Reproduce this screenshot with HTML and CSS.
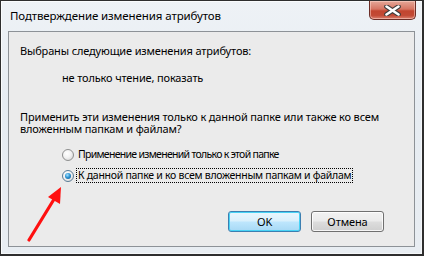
FILE: index.html
```html
<!DOCTYPE html>
<html lang="ru">
<head>
<meta charset="utf-8">
<title>Подтверждение изменения атрибутов</title>
<link rel="stylesheet" href="styles.css">
</head>
<body>
<div class="window">
  <div class="titlebar">
    <span class="title">Подтверждение изменения атрибутов</span>
    <div class="close">
      <svg width="19" height="11" viewBox="0 0 19 11">
        <path d="M3.5 1.5 L15.5 9.5 M15.5 1.5 L3.5 9.5" stroke="#3b3b3b" stroke-width="4.6" stroke-linecap="round"/>
        <path d="M3.5 1.5 L15.5 9.5 M15.5 1.5 L3.5 9.5" stroke="#ffffff" stroke-width="2.6" stroke-linecap="round"/>
      </svg>
    </div>
  </div>
  <div class="panel">
    <p class="line first">Выбраны следующие изменения атрибутов:</p>
    <p class="line attrs">не только чтение, показать</p>
    <div class="question">
      <p class="line">Применить эти изменения только к данной папке или также ко всем</p>
      <p class="line">вложенным папкам и файлам?</p>
    </div>
    <div class="options">
      <label class="option">
        <span class="radio"></span>
        <span class="label opt1">Применение изменений только к этой папке</span>
      </label>
      <label class="option">
        <span class="radio checked"><span class="dot"></span></span>
        <span class="label opt2 focus">К данной папке и ко всем вложенным папкам и файлам</span>
      </label>
    </div>
    <div class="buttons">
      <button class="btn default">OK</button>
      <button class="btn">Отмена</button>
    </div>
  </div>
  <svg class="arrow" width="60" height="70" viewBox="0 0 60 70">
    <path d="M2 56 L29 12" stroke="#ff1010" stroke-width="3.2" stroke-linecap="round"/>
    <path d="M34 3 L21 13 L33 20 Z" fill="#ff1010"/>
  </svg>
</div>
</body>
</html>
```
FILE: styles.css
```css
* { box-sizing: border-box; }
html, body { margin: 0; padding: 0; }
body {
  width: 424px;
  height: 256px;
  background: #ffffff;
  font-family: "Noto Sans", "Open Sans", sans-serif;
  font-size: 11px;
  letter-spacing: -0.15px;
  color: #000;
}
.window {
  position: relative;
  width: 424px;
  height: 256px;
  border: 1px solid #2e2e2e;
  border-right: 2px solid #2e2e2e;
  border-bottom: 2px solid #2e2e2e;
  background: linear-gradient(to bottom, #eef2f6 0%, #e6ecf2 40%, #e8edf2 100%);
  display: flex;
  flex-direction: column;
  padding: 0 7px 7px 7px;
  box-shadow: inset 1px 1px 0 #fafcfd, inset -1px -1px 0 #f4f6f8;
}
.titlebar {
  height: 30px;
  display: flex;
  align-items: flex-start;
  position: relative;
}
.title {
  margin-top: 7px;
  margin-left: 2px;
  font-size: 11.5px;
  letter-spacing: -0.1px;
  line-height: 15px;
  color: #000;
}
.close {
  margin-left: auto;
  margin-right: -1px;
  width: 47px;
  height: 19px;
  border: 1px solid #6b2d26;
  border-top: none;
  border-radius: 0 0 5px 5px;
  background: linear-gradient(to bottom, #e5a898 0%, #d67563 45%, #c2452f 55%, #c24a35 80%, #dc8170 100%);
  box-shadow: inset 0 0 0 1px rgba(255,220,210,0.5);
  display: flex;
  align-items: center;
  justify-content: center;
}
.panel {
  flex: 1;
  background: #ebebeb;
  border: 1px solid #8d9297;
  padding: 12px 0 0 11px;
  display: flex;
  flex-direction: column;
}
.line {
  margin: 0;
  line-height: 13px;
  white-space: nowrap;
}
.attrs {
  margin-top: 14px;
  padding-left: 42px;
}
.question {
  margin-top: 27px;
}
.question .line {
  line-height: 12px;
}
.options {
  margin-top: 13px;
  padding-left: 42px;
  display: flex;
  flex-direction: column;
  gap: 8px;
}
.option {
  display: flex;
  align-items: center;
  height: 13px;
}
.radio {
  width: 12px;
  height: 12px;
  border-radius: 50%;
  border: 1px solid #8e8f8f;
  background: radial-gradient(circle at 40% 35%, #ffffff 0%, #f2f2f2 45%, #cfcfcf 100%);
  margin-right: 3px;
  display: flex;
  align-items: center;
  justify-content: center;
  flex: none;
}
.radio.checked { border-color: #5a7c96; }
.dot {
  width: 6px;
  height: 6px;
  border-radius: 50%;
  background: radial-gradient(circle at 40% 35%, #a6e2ff 0%, #2f95d3 45%, #0c4f86 100%);
}
.label {
  font-size: 10.5px;
  line-height: 13px;
  white-space: nowrap;
  padding: 0 1px;
}
.opt1 { letter-spacing: -0.7px; }
.opt2 { letter-spacing: -0.27px; }
.label.focus {
  outline: 1px dotted #000;
  outline-offset: 0;
}
.buttons {
  margin-top: 29px;
  display: flex;
  justify-content: flex-end;
  gap: 10px;
  padding-right: 30px;
}
.btn {
  width: 73px;
  height: 21px;
  font-family: inherit;
  font-size: 11px;
  letter-spacing: -0.1px;
  line-height: 15px;
  padding: 0;
  border: 1px solid #707070;
  border-radius: 3px;
  background: linear-gradient(to bottom, #f2f2f2 0%, #ebebeb 48%, #dddddd 52%, #cfcfcf 100%);
  box-shadow: inset 0 0 0 1px rgba(255,255,255,0.8);
  color: #000;
}
.btn.default {
  border-color: #3c7fb1;
  background: linear-gradient(to bottom, #eaf6fd 0%, #d9f0fc 48%, #bee6fd 52%, #a7d9f5 100%);
  box-shadow: inset 0 0 0 1px #48d3f5;
}
.arrow {
  position: absolute;
  left: 26px;
  top: 183px;
}
```
